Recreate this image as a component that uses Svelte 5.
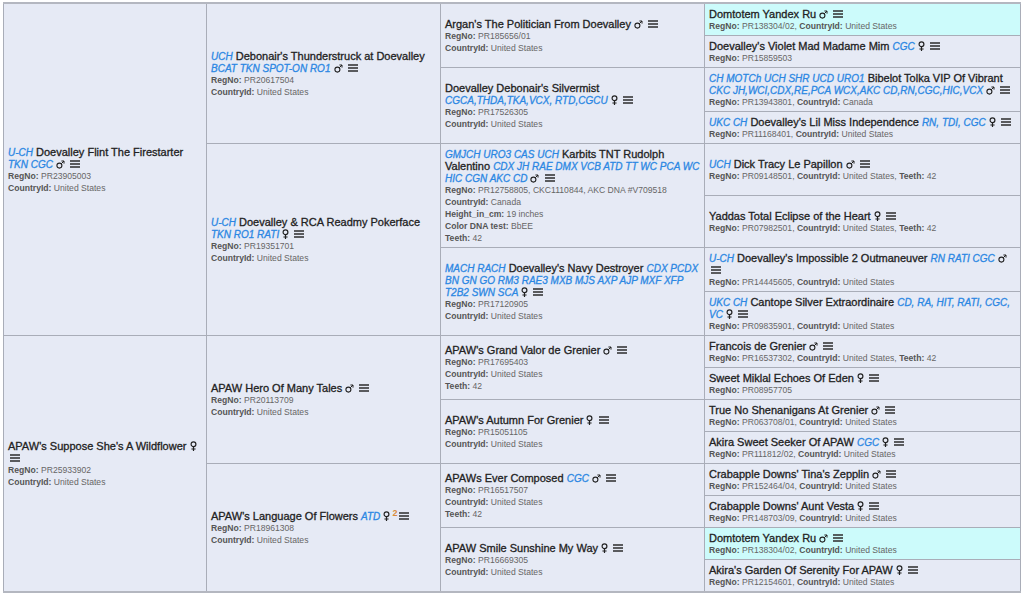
<script>
  const US = 'United States';
  const dog = (pre, name, post, sex, details, extra = {}) => ({ pre, name, post, sex, details, ...extra });
  const reg = (no, ...rest) => [['RegNo', no], ...rest];
  const cc = ['CountryId', US];
  const teeth = ['Teeth', '42'];

  // one entry per table row, each cell carries its generation via span
  const rows = [
    [
      { span: 8, ...dog('U-CH', 'Doevalley Flint The Firestarter', 'TKN CGC', 'm', reg('PR23905003', cc)) },
      { span: 4, ...dog('UCH', "Debonair's Thunderstruck at Doevalley", 'BCAT TKN SPOT-ON RO1', 'm', reg('PR20617504', cc)) },
      { span: 2, ...dog('', "Argan's The Politician From Doevalley", '', 'm', reg('PR185656/01', cc)) },
      { span: 1, inline: true, hl: true, ...dog('', 'Domtotem Yandex Ru', '', 'm', reg('PR138304/02', cc)) }
    ],
    [{ span: 1, inline: true, ...dog('', "Doevalley's Violet Mad Madame Mim", 'CGC', 'f', reg('PR15859503')) }],
    [
      { span: 2, ...dog('', "Doevalley Debonair's Silvermist", 'CGCA,THDA,TKA,VCX, RTD,CGCU', 'f', reg('PR17526305', cc)) },
      { span: 1, inline: true, ...dog('CH MOTCh UCH SHR UCD URO1', 'Bibelot Tolka VIP Of Vibrant', 'CKC JH,WCI,CDX,RE,PCA WCX,AKC CD,RN,CGC,HIC,VCX', 'm', reg('PR13943801', ['CountryId', 'Canada'])) }
    ],
    [{ span: 1, inline: true, ...dog('UKC CH', "Doevalley's Lil Miss Independence", 'RN, TDI, CGC', 'f', reg('PR11168401', cc)) }],
    [
      { span: 4, ...dog('U-CH', 'Doevalley & RCA Readmy Pokerface', 'TKN RO1 RATI', 'f', reg('PR19351701', cc)) },
      { span: 2, ...dog('GMJCH URO3 CAS UCH', 'Karbits TNT Rudolph Valentino', 'CDX JH RAE DMX VCB ATD TT WC PCA WC HIC CGN AKC CD', 'm', reg('PR12758805, CKC1110844, AKC DNA #V709518', ['CountryId', 'Canada'], ['Height_in_cm', '19 inches'], ['Color DNA test', 'BbEE'], teeth)) },
      { span: 1, inline: true, ...dog('UCH', 'Dick Tracy Le Papillon', '', 'm', reg('PR09148501', cc, teeth)) }
    ],
    [{ span: 1, inline: true, ...dog('', 'Yaddas Total Eclipse of the Heart', '', 'f', reg('PR07982501', cc, teeth)) }],
    [
      { span: 2, ...dog('MACH RACH', "Doevalley's Navy Destroyer", 'CDX PCDX BN GN GO RM3 RAE3 MXB MJS AXP AJP MXF XFP T2B2 SWN SCA', 'f', reg('PR17120905', cc)) },
      { span: 1, inline: true, ...dog('U-CH', "Doevalley's Impossible 2 Outmaneuver", 'RN RATI CGC', 'm', reg('PR14445605', cc)) }
    ],
    [{ span: 1, inline: true, ...dog('UKC CH', 'Cantope Silver Extraordinaire', 'CD, RA, HIT, RATI, CGC, VC', 'f', reg('PR09835901', cc)) }],
    [
      { span: 8, ...dog('', "APAW's Suppose She's A Wildflower", '', 'f', reg('PR25933902', cc)) },
      { span: 4, ...dog('', 'APAW Hero Of Many Tales', '', 'm', reg('PR20113709', cc)) },
      { span: 2, ...dog('', "APAW's Grand Valor de Grenier", '', 'm', reg('PR17695403', cc, teeth)) },
      { span: 1, inline: true, ...dog('', 'Francois de Grenier', '', 'm', reg('PR16537302', cc, teeth)) }
    ],
    [{ span: 1, inline: true, ...dog('', 'Sweet Miklal Echoes Of Eden', '', 'f', reg('PR08957705')) }],
    [
      { span: 2, ...dog('', "APAW's Autumn For Grenier", '', 'f', reg('PR15051105', cc)) },
      { span: 1, inline: true, ...dog('', 'True No Shenanigans At Grenier', '', 'm', reg('PR063708/01', cc)) }
    ],
    [{ span: 1, inline: true, ...dog('', 'Akira Sweet Seeker Of APAW', 'CGC', 'f', reg('PR111812/02', cc)) }],
    [
      { span: 4, sup: '2', ...dog('', "APAW's Language Of Flowers", 'ATD', 'f', reg('PR18961308', cc)) },
      { span: 2, ...dog('', 'APAWs Ever Composed', 'CGC', 'm', reg('PR16517507', cc, teeth)) },
      { span: 1, inline: true, ...dog('', "Crabapple Downs' Tina's Zepplin", '', 'm', reg('PR152464/04', cc)) }
    ],
    [{ span: 1, inline: true, ...dog('', "Crabapple Downs' Aunt Vesta", '', 'f', reg('PR148703/09', cc)) }],
    [
      { span: 2, ...dog('', 'APAW Smile Sunshine My Way', '', 'f', reg('PR16669305', cc)) },
      { span: 1, inline: true, hl: true, ...dog('', 'Domtotem Yandex Ru', '', 'm', reg('PR138304/02', cc)) }
    ],
    [{ span: 1, inline: true, ...dog('', "Akira's Garden Of Serenity For APAW", '', 'f', reg('PR12154601', cc)) }]
  ];
</script>

{#snippet sexIcon(sex)}
  {#if sex === 'm'}
    <svg class="sex" width="9" height="9" viewBox="0 0 9 9" aria-label="male">
      <circle cx="3.4" cy="5.6" r="2.5" fill="none" stroke="#222" stroke-width="1.1" />
      <path d="M5.2 3.8 8 1M5.4 1H8V3.6" fill="none" stroke="#222" stroke-width="1" />
    </svg>
  {:else}
    <svg class="sex" width="7" height="10" viewBox="0 0 7 10" aria-label="female">
      <circle cx="3.5" cy="3.2" r="2.4" fill="none" stroke="#222" stroke-width="1.2" />
      <path d="M3.5 5.6V10M1.4 8H5.6" fill="none" stroke="#222" stroke-width="1.2" />
    </svg>
  {/if}
{/snippet}

{#snippet menuIcon()}
  <svg class="menu" width="10" height="8" viewBox="0 0 10 8" aria-label="menu">
    <path d="M0 1H10M0 4H10M0 7H10" stroke="#2c2c2c" stroke-width="1.3" />
  </svg>
{/snippet}

<table class="pedigree">
  <colgroup>
    <col class="c1" /><col class="c2" /><col class="c3" /><col class="c4" />
  </colgroup>
  <tbody>
    {#each rows as row}
      <tr>
        {#each row as cell}
          <td rowspan={cell.span} class:hl={cell.hl}>
            <div class="name">
              {#if cell.pre}<span class="title">{cell.pre}</span>{' '}{/if}{cell.name}{#if cell.post}{' '}<span class="title">{cell.post}</span>{/if}
              {@render sexIcon(cell.sex)}{#if cell.sup}<sup>{cell.sup}</sup>{/if}
              {@render menuIcon()}
            </div>
            {#if cell.inline}
              <div class="info">
                {#each cell.details as [key, value], i}{#if i > 0}{', '}{/if}<b>{key}:</b>{' '}{value}{/each}
              </div>
            {:else}
              {#each cell.details as [key, value]}
                <div class="info"><b>{key}:</b> {value}</div>
              {/each}
            {/if}
          </td>
        {/each}
      </tr>
    {/each}
  </tbody>
</table>

<style>
  :global(body) {
    background: #fff;
    font-family: "Liberation Sans", Arial, sans-serif;
  }

  .pedigree {
    margin: 2px 0 0 3px;
    width: 1017px;
    table-layout: fixed;
    border-collapse: collapse;
    background: #e6eaf5;
    font-size: 11px;
    line-height: 12px;
    border-top: 2px solid #b4b7c0;
    border-bottom: 2px solid #b4b7c0;
  }

  .c1 { width: 203px; }
  .c2 { width: 234px; }
  .c3 { width: 264px; }
  .c4 { width: 316px; }

  td {
    padding: 3.5px 4px;
    border: 1px solid #a9adb8;
    vertical-align: middle;
  }

  td.hl {
    background: #ccfbfb;
  }

  .name {
    color: #222;
    font-size: 11px;
    -webkit-text-stroke: 0.3px #222;
  }

  .title {
    color: #2b87e3;
    font-size: 10px;
    line-height: 10px;
    font-style: italic;
    -webkit-text-stroke: 0.3px #2b87e3;
  }

  .info {
    color: #666;
    font-size: 8.6px;
  }

  .info b {
    color: #555;
    font-weight: bold;
  }

  .sex {
    vertical-align: -1px;
  }

  .menu {
    margin-left: 2px;
    vertical-align: 0;
  }

  sup {
    color: #d98a3c;
    font-size: 9px;
    line-height: 0;
    margin: 0 -3px 0 2px;
    -webkit-text-stroke: 0;
    font-weight: bold;
    vertical-align: 4px;
  }
</style>
